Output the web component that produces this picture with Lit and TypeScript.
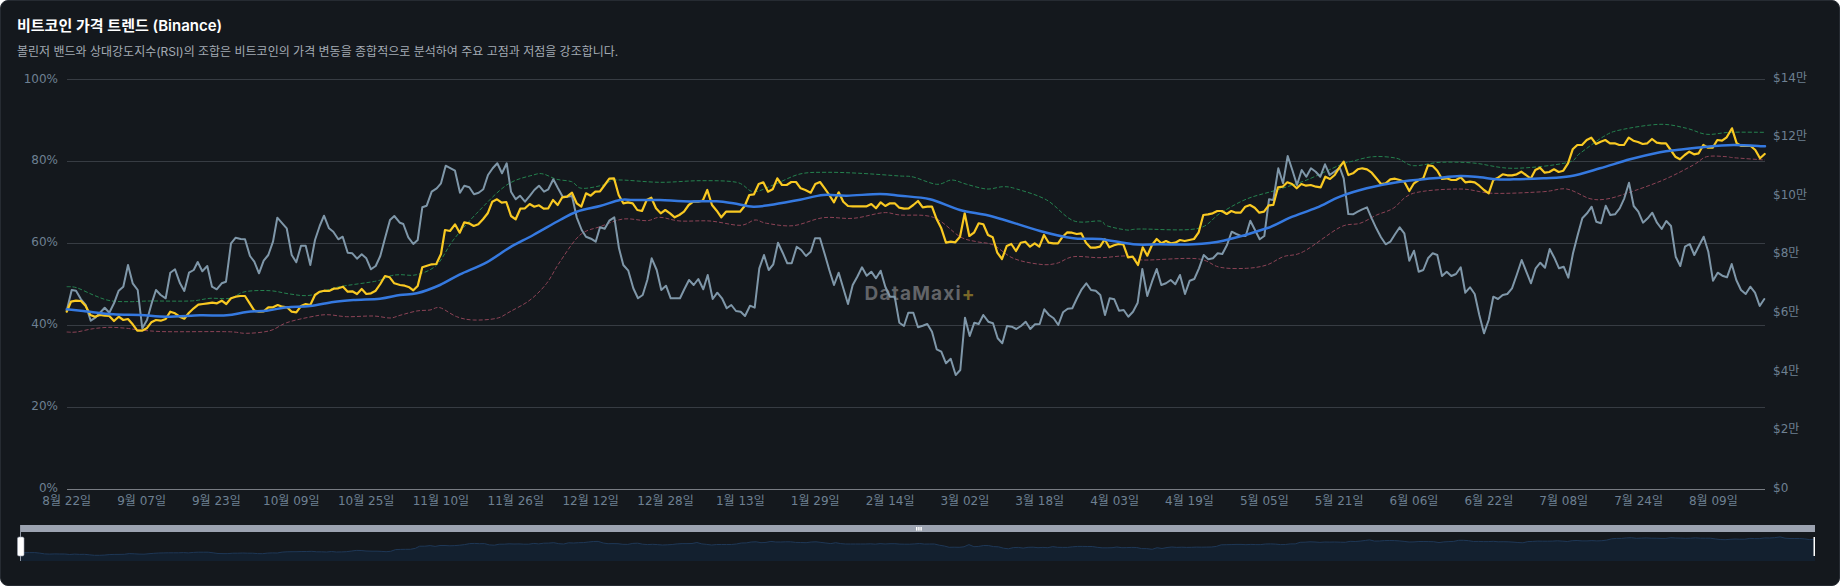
import { LitElement, html, css, svg } from "lit";
import { customElement } from "lit/decorators.js";

type P = [number, number];
const conv = (ox: number, oy: number, s: string): P[] => {
  const n = s.trim().split(/[\s,]+/).map(Number);
  const r: P[] = [];
  for (let i = 0; i + 1 < n.length; i += 2) r.push([ox + n[i] / 3, oy + n[i + 1] / 3]);
  return r;
};
const join = (a: string, b: string, c: string, d: string): P[] => [
  ...conv(0, 200, a), ...conv(400, 130, b), ...conv(900, 130, c), ...conv(1340, 100, d),
];

const GRAY = join(
  "200,332 215,270 228,272 243,298 257,315 272,362 287,352 300,338 314,323 328,338 342,310 356,272 370,260 384,195 398,250 413,270 427,385 441,360 455,310 468,270 482,285 497,295 511,218 525,208 540,250 553,273 567,218 581,210 593,186 607,214 622,198 636,260 650,268 665,250 678,245 693,130 707,113 722,117 735,118 750,168 763,185 777,220 791,182 805,165 819,125 832,53 847,70 860,85 875,165 889,187 903,137 917,137 931,195 945,120 959,78 972,47 987,85 1000,95 1015,118 1028,110 1043,158 1057,160 1071,176 1085,163 1099,175 1113,208 1127,198 1141,168 1155,115 1170,60 1183,48 1197,65",
  "0,278 10,282 25,322 40,342 53,330 67,232 80,227 95,185 110,175 123,160 137,107 152,115 165,122 180,188 193,167 208,172 222,193 236,188 250,178 264,135 278,115 292,100 306,130 320,100 333,185 347,208 360,197 375,215 390,197 403,180 417,167 432,185 445,178 460,148 474,175 488,200 502,200 516,198 530,262 545,300 558,320 573,326 587,335 600,292 614,296 628,272 643,262 657,355 670,405 685,422 700,475 714,505 728,495 742,450 755,385 770,420 784,480 798,467 812,505 825,505 840,505 853,478 867,450 881,465 895,447 910,478 923,435 938,507 952,488 966,505 980,535 994,525 1008,543 1022,545 1035,558 1050,527 1064,533 1078,415 1092,375 1106,420 1120,403 1134,338 1148,368 1162,400 1175,400 1190,350 1204,360 1218,378 1232,365 1245,325 1260,325 1274,372 1288,420 1302,465 1316,428 1330,475 1344,522 1358,465 1372,440 1386,412 1400,437 1414,425 1428,445 1442,422 1456,470 1470,500 1484,500 1498,578",
  "12,588 25,548 40,548 54,592 68,587 82,582 96,605 110,658 124,665 138,700 152,686 167,735 181,720 195,563 209,618 223,578 236,582 250,555 265,575 279,580 293,625 307,640 321,588 335,590 349,597 363,588 377,575 391,597 405,583 419,582 433,538 447,555 461,565 475,585 489,547 503,536 517,535 531,505 545,478 559,460 573,480 587,482 601,495 615,555 629,505 643,508 657,542 671,540 685,560 699,545 713,518 727,417 742,498 756,455 770,417 784,465 798,460 812,450 826,463 840,435 855,492 869,452 883,447 897,415 911,375 925,388 939,385 953,370 967,372 981,345 995,305 1009,312 1023,318 1037,318 1051,272 1065,300 1079,328 1093,318 1107,208 1120,210 1135,115 1149,160 1163,78 1177,120 1191,165 1205,120 1219,140 1233,115 1247,125 1261,140 1275,103 1289,135 1303,125 1317,115",
  "0,205 11,235 25,342 39,343 53,335 67,328 81,322 95,355 109,385 123,412 137,433 151,425 165,403 179,382 193,400 208,482 222,452 236,515 250,510 264,475 278,460 292,465 306,528 320,515 334,528 348,522 362,502 376,578 390,562 404,582 418,645 432,700 446,660 460,590 474,597 488,585 502,582 516,565 530,525 545,480 559,515 573,550 587,505 601,488 615,503 629,447 643,473 657,505 671,500 685,533 699,460 713,405 727,355 741,340 755,320 769,365 783,370 797,317 811,345 825,343 839,325 853,295 867,248 881,318 895,335 909,368 923,355 937,338 951,368 965,387 979,363 993,378 1007,470 1021,498 1035,440 1049,432 1063,465 1077,437 1091,410 1105,455 1119,542 1133,518 1147,527 1161,532 1175,492 1189,540 1203,570 1217,582 1231,560 1245,578 1259,618 1273,597"
);

const YELLOW = join(
  "200,335 213,305 228,302 243,303 257,318 271,345 285,350 300,345 314,347 328,348 342,363 356,350 370,360 384,357 398,373 412,392 426,392 440,385 454,367 468,360 482,362 497,357 511,335 525,340 539,350 553,356 567,338 581,325 595,314 609,312 623,310 637,308 651,310 665,302 679,312 693,295 707,290 721,288 735,288 749,310 763,332 777,335 791,334 805,322 819,322 833,315 847,320 861,322 875,335 889,337 903,318 917,312 931,315 945,285 959,275 973,272 987,273 1001,266 1015,265 1029,260 1043,275 1057,274 1071,282 1085,267 1099,282 1113,280 1127,272 1141,252 1155,228 1169,232 1183,250",
  "0,465 14,467 28,472 40,481 53,468 67,412 81,407 95,403 109,402 123,372 135,300 150,303 165,283 179,308 193,277 207,280 221,288 235,283 249,268 263,250 277,215 291,208 305,218 319,216 333,258 347,268 361,236 375,235 389,222 403,230 417,226 431,236 445,235 459,210 473,225 487,202 501,200 516,188 530,220 544,230 558,190 572,197 586,185 600,184 614,165 628,146 642,145 656,195 670,220 684,217 698,220 712,240 726,243 740,210 754,203 768,235 782,250 796,240 810,250 824,262 838,255 852,245 866,225 880,215 894,215 908,212 922,180 936,225 950,242 964,262 978,245 992,245 1006,245 1020,245 1034,228 1048,195 1062,193 1076,162 1090,157 1104,185 1118,178 1132,145 1146,165 1160,165 1174,156 1188,156 1202,175 1216,180 1232,188 1246,162 1260,156 1274,175 1288,195 1302,217 1316,187 1330,215 1344,228 1358,229 1372,229 1386,229 1400,229 1414,222 1428,235 1442,217 1456,228 1470,220 1484,220 1498,233",
  "12,236 26,235 40,225 54,213 68,232 82,230 96,230 110,268 124,295 138,338 152,335 166,337 180,320 194,250 208,318 222,308 236,280 250,283 264,315 278,322 292,368 306,387 320,348 334,342 348,363 362,338 376,335 390,350 404,340 418,350 432,315 446,338 460,340 474,340 488,320 502,307 516,308 530,312 544,310 558,338 572,353 586,353 600,350 614,328 628,352 642,346 656,342 670,343 684,382 698,380 714,405 728,352 742,377 756,345 770,327 784,340 798,333 812,340 826,338 840,330 854,333 868,330 882,327 896,307 910,255 924,253 938,250 952,243 966,243 980,252 994,243 1008,248 1022,248 1036,230 1050,225 1064,233 1078,248 1092,245 1106,226 1120,225 1134,172 1148,170 1162,157 1176,162 1190,175 1204,162 1218,167 1232,165 1248,170 1262,172 1276,140 1290,147 1304,135 1318,113",
  "0,200 11,185 25,225 39,220 53,208 67,205 81,208 95,218 109,235 123,252 137,250 151,238 165,236 179,240 193,245 208,273 222,250 236,240 250,235 264,196 278,198 292,212 306,237 320,235 334,240 348,240 362,232 376,247 390,245 404,247 418,257 432,270 446,280 460,240 474,233 488,223 502,226 516,226 530,223 544,215 558,225 572,236 586,210 600,203 614,218 628,216 642,208 656,216 670,212 684,190 698,148 712,135 726,135 740,120 754,113 768,132 782,125 796,120 810,130 824,130 838,135 852,135 866,113 880,122 894,126 908,132 922,130 936,117 950,128 964,130 978,130 992,150 1006,170 1020,178 1034,165 1048,155 1062,163 1076,160 1090,135 1104,143 1118,143 1132,120 1146,122 1160,112 1176,85 1190,130 1204,138 1218,138 1232,138 1246,150 1260,175 1274,162"
);

const BLUE = join(
  "200,328 250,333 340,343 420,345 500,350 600,346 680,346 740,336 800,332 860,322 930,318 1000,306 1060,300 1140,296",
  "0,495 50,490 120,465 180,433 260,397 330,352 400,315 480,270 530,245 600,228 660,210 700,210 780,210 850,214 950,214 1000,220 1060,230 1110,225 1200,209 1270,195 1340,197 1440,192",
  "0,197 90,208 180,240 280,260 420,303 520,325 600,327 700,343 780,343 880,343 970,332 1100,295 1170,263 1250,233",
  "0,290 80,265 180,245 280,235 360,228 420,232 470,238 520,238 610,235 690,229 780,205 870,178 960,157 1010,150 1100,140 1180,135 1275,139"
);

const GREEN = join(
  "200,260 230,263 280,285 330,302 390,305 450,303 570,303 630,295 690,295 735,275 810,272 870,282 930,286 1010,262 1130,243 1170,228",
  "0,434 50,434 110,405 160,330 230,250 320,165 400,135 430,132 470,148 515,155 545,175 610,165 650,150 780,157 900,152 1010,157 1060,185 1120,165 1200,132 1280,127 1380,130",
  "0,138 40,141 110,163 155,150 200,163 260,177 310,170 350,177 440,210 520,272 600,273 620,287 680,300 720,297 890,296 960,250 1040,207 1130,180 1220,150",
  "0,195 40,183 100,170 170,175 220,197 300,187 400,189 520,205 680,188 720,160 790,110 840,90 960,73 1040,85 1100,103 1170,97 1275,97"
);

const RED = join(
  "200,396 230,396 280,386 330,382 380,385 420,390 500,395 680,395 740,400 810,392 860,368 930,351 980,344 1040,350 1120,348 1170,354",
  "0,556 50,543 90,540 120,533 170,560 220,570 290,565 330,545 390,510 440,460 480,395 540,315 600,290 670,267 740,272 780,262 840,273 930,273 1020,286 1065,270 1100,280 1180,287 1270,263 1360,265 1450,248",
  "0,255 100,262 180,320 230,335 280,345 340,385 420,403 470,400 520,380 600,383 680,378 730,390 890,386 960,412 1040,415 1100,405 1150,380 1210,365",
  "0,382 60,370 110,345 160,325 220,280 360,267 460,280 610,275 680,267 750,296 800,297 860,280 970,240 1060,195 1100,170 1160,170 1180,173 1275,180"
);

const f = (n: number) => n.toFixed(1);
const poly = (p: P[]) => "M" + p.map(([x, y]) => `${f(x)} ${f(y)}`).join("L");
const smooth = (p: P[]) => {
  let d = `M${f(p[0][0])} ${f(p[0][1])}`;
  for (let i = 0; i < p.length - 1; i++) {
    const a = p[Math.max(0, i - 1)], b = p[i], c = p[i + 1], e = p[Math.min(p.length - 1, i + 2)];
    d += `C${f(b[0] + (c[0] - a[0]) / 6)} ${f(b[1] + (c[1] - a[1]) / 6)} ${f(c[0] - (e[0] - b[0]) / 6)} ${f(c[1] - (e[1] - b[1]) / 6)} ${f(c[0])} ${f(c[1])}`;
  }
  return d;
};

const PLOT_L = 67, PLOT_R = 1765;
const SL_L = 20, SL_R = 1815, SL_BOTTOM = 561;
const mini: P[] = YELLOW.map(([x, y]) => [
  SL_L + ((x - PLOT_L) * (SL_R - SL_L)) / (PLOT_R - PLOT_L),
  552.6 + (y - 300.6) * 0.0913,
]);
const miniArea = poly(mini) + `L${SL_R} ${SL_BOTTOM}L${SL_L} ${SL_BOTTOM}Z`;

const GRID = [79.5, 161.5, 243.5, 325.5, 407.5];
const LEFT = ["100%", "80%", "60%", "40%", "20%", "0%"];
const RIGHT = ["$14만", "$12만", "$10만", "$8만", "$6만", "$4만", "$2만", "$0"];
const DATES = ["8월 22일", "9월 07일", "9월 23일", "10월 09일", "10월 25일", "11월 10일", "11월 26일", "12월 12일", "12월 28일", "1월 13일", "1월 29일", "2월 14일", "3월 02일", "3월 18일", "4월 03일", "4월 19일", "5월 05일", "5월 21일", "6월 06일", "6월 22일", "7월 08일", "7월 24일", "8월 09일"];

@customElement("app-root")
export class AppRoot extends LitElement {
  static styles = css`
    :host { display: block; }
    .card {
      box-sizing: border-box;
      height: 586px;
      display: flex;
      flex-direction: column;
      background: #14181d;
      border: 1px solid #262b32;
      border-radius: 8px;
      padding: 15px 0 0 16px;
      overflow: hidden;
    }
    h2 {
      margin: 0;
      font: 600 15px/20px Inter, "Noto Sans CJK KR", sans-serif;
      color: #ffffff;
    }
    p {
      margin: 8px 0 0;
      font: 400 12px/16px Inter, "Noto Sans CJK KR", sans-serif;
      color: #a3aab3;
    }
    svg.chart { display: block; flex: none; margin: 5px 0 0 -17px; width: 1840px; height: 521px; }
    .grid { stroke: #373c43; stroke-width: 1; }
    .axis { stroke: #787c83; stroke-width: 1; }
    .t { font: 12px "DejaVu Sans", "Noto Sans CJK KR", sans-serif; fill: #6e8092; dominant-baseline: central; }
    .end { text-anchor: end; }
    .mid { text-anchor: middle; }
    .wm { font: 700 19px "Inter", sans-serif; fill: #626468; dominant-baseline: central; letter-spacing: 1.2px; }
    .wmp { fill: #7a6828; }
    .line { fill: none; stroke-linejoin: round; stroke-linecap: round; }
    .gray { stroke: #7f97a9; stroke-width: 2; }
    .yellow { stroke: #f9c922; stroke-width: 2.2; }
    .blue { stroke: #3579e0; stroke-width: 2.5; }
    .green { stroke: #25824f; stroke-width: 1; stroke-dasharray: 4 2; stroke-linecap: butt; }
    .red { stroke: #8c4356; stroke-width: 1; stroke-dasharray: 4 2; stroke-linecap: butt; }
    .bar { fill: #9ca3b1; }
    .area { fill: #13202f; }
    .mline { fill: none; stroke: #1e3756; stroke-width: 1; }
    .stem { stroke: #8f96a3; stroke-width: 1; }
    .handle { fill: #ffffff; stroke: #9ca3b1; stroke-width: 0.6; }
    .handle-end { fill: #ffffff; }
    .grip { fill: #ffffff; }
  `;

  render() {
    return html`
      <div class="card">
        <h2>비트코인 가격 트렌드 (Binance)</h2>
        <p>볼린저 밴드와 상대강도지수(RSI)의 조합은 비트코인의 가격 변동을 종합적으로 분석하여 주요 고점과 저점을 강조합니다.</p>
        <svg class="chart" viewBox="0 65 1840 521">
          ${GRID.map((y) => svg`<line class="grid" x1="${PLOT_L}" x2="${PLOT_R}" y1="${y}" y2="${y}"></line>`)}
          <line class="axis" x1="${PLOT_L}" x2="${PLOT_R}" y1="489.5" y2="489.5"></line>
          ${LEFT.map((t, i) => svg`<text class="t end" x="58" y="${78.5 + i * 81.9}">${t}</text>`)}
          ${RIGHT.map((t, i) => svg`<text class="t" x="1773" y="${77.5 + i * 58.6}">${t}</text>`)}
          ${DATES.map((t, i) => svg`<text class="t mid" x="${66.7 + i * 74.85}" y="501">${t}</text>`)}
          <text class="wm" x="864.5" y="293.5">DataMaxi<tspan class="wmp">+</tspan></text>
          <path class="line red" d="${smooth(RED)}"></path>
          <path class="line green" d="${smooth(GREEN)}"></path>
          <path class="line gray" d="${poly(GRAY)}"></path>
          <path class="line yellow" d="${poly(YELLOW)}"></path>
          <path class="line blue" d="${smooth(BLUE)}"></path>

          <path class="area" d="${miniArea}"></path>
          <path class="mline" d="${poly(mini)}"></path>
          <rect class="bar" x="${SL_L}" y="525" width="${SL_R - SL_L}" height="7"></rect>
          <rect class="grip" x="916" y="527" width="1.4" height="3.6"></rect>
          <rect class="grip" x="918.2" y="527" width="1.4" height="3.6"></rect>
          <rect class="grip" x="920.4" y="527" width="1.4" height="3.6"></rect>
          <line class="stem" x1="20.5" x2="20.5" y1="525" y2="561"></line>
          <rect class="handle" x="17.5" y="537" width="6.5" height="19" rx="1.6"></rect>
          <rect class="handle-end" x="1813.5" y="537" width="1.5" height="19"></rect>
        </svg>
      </div>
    `;
  }
}
